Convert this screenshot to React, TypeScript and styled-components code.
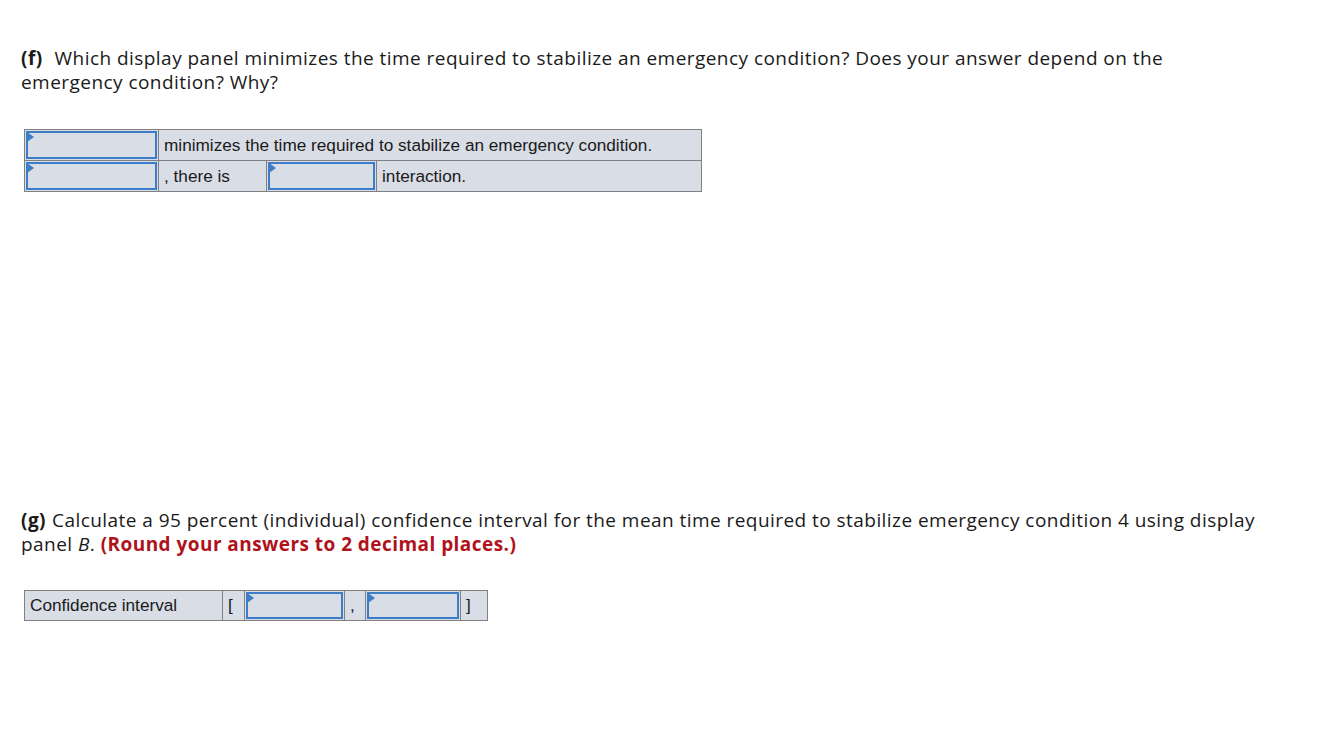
import styled, { createGlobalStyle } from 'styled-components'

const GlobalStyle = createGlobalStyle`
  body {
    margin: 0;
    background: #ffffff;
  }
`

const Page = styled.div`
  padding: 46px 20px 0 21px;
  font-family: 'Open Sans', Lato, sans-serif;
  color: #1a1a1a;
`

const Question = styled.p<{ $top?: number }>`
  margin: ${(p) => p.$top ?? 0}px 0 0;
  font-size: 19px;
  line-height: 24px;
  letter-spacing: 0.45px;
  max-width: 1241px;
`

const Label = styled.b<{ $gap: number }>`
  font-weight: 700;
  margin-right: ${(p) => p.$gap}px;
`

const Hint = styled.b`
  color: #b0121b;
  font-weight: 700;
`

const Table = styled.div<{ $width: number; $top: number }>`
  width: ${(p) => p.$width}px;
  margin: ${(p) => p.$top}px 0 0 3px;
  border: 1px solid #808080;
  font-family: 'Liberation Sans', Arial, sans-serif;
  font-size: 17.2px;
  letter-spacing: 0;
  color: #1a1a1a;
  background: #d9dde6;
`

const Row = styled.div<{ $height: number }>`
  display: flex;
  height: ${(p) => p.$height}px;
  & + & {
    border-top: 1px solid #808080;
  }
`

const Cell = styled.div<{ $width?: number }>`
  display: flex;
  align-items: center;
  padding: 0 5px;
  box-sizing: border-box;
  flex: ${(p) => (p.$width ? `0 0 ${p.$width}px` : '1 1 auto')};
  & + & {
    border-left: 1px solid #808080;
  }
`

const InputCell = styled(Cell)`
  padding: 1px;
`

const Field = styled.div`
  position: relative;
  width: 100%;
  height: 100%;
  box-sizing: border-box;
  border: 2px solid #3d7cc6;
  background: #d9dde6;
  &::before {
    content: '';
    position: absolute;
    left: -1px;
    top: -1px;
    border-top: 5px solid transparent;
    border-bottom: 5px solid transparent;
    border-left: 7px solid #3d7cc6;
  }
`

export default function App() {
  return (
    <Page>
      <GlobalStyle />
      <Question>
        <Label $gap={12}>(f)</Label>Which display panel minimizes the time required to stabilize
        an emergency condition? Does your answer depend on the emergency condition? Why?
      </Question>

      <Table $width={676} $top={35}>
        <Row $height={30}>
          <InputCell $width={133}>
            <Field />
          </InputCell>
          <Cell>minimizes the time required to stabilize an emergency condition.</Cell>
        </Row>
        <Row $height={30}>
          <InputCell $width={133}>
            <Field />
          </InputCell>
          <Cell $width={108}>, there is</Cell>
          <InputCell $width={110}>
            <Field />
          </InputCell>
          <Cell>interaction.</Cell>
        </Row>
      </Table>

      <Question $top={316}>
        <Label $gap={6}>(g)</Label>Calculate a 95 percent (individual) confidence interval for
        the mean time required to stabilize emergency condition 4 using display panel <i>B</i>.{' '}
        <Hint>(Round your answers to 2 decimal places.)</Hint>
      </Question>

      <Table $width={462} $top={34}>
        <Row $height={29}>
          <Cell $width={197}>Confidence interval</Cell>
          <Cell $width={22}>[</Cell>
          <InputCell $width={100}>
            <Field />
          </InputCell>
          <Cell $width={21}>,</Cell>
          <InputCell $width={95}>
            <Field />
          </InputCell>
          <Cell>]</Cell>
        </Row>
      </Table>
    </Page>
  )
}
